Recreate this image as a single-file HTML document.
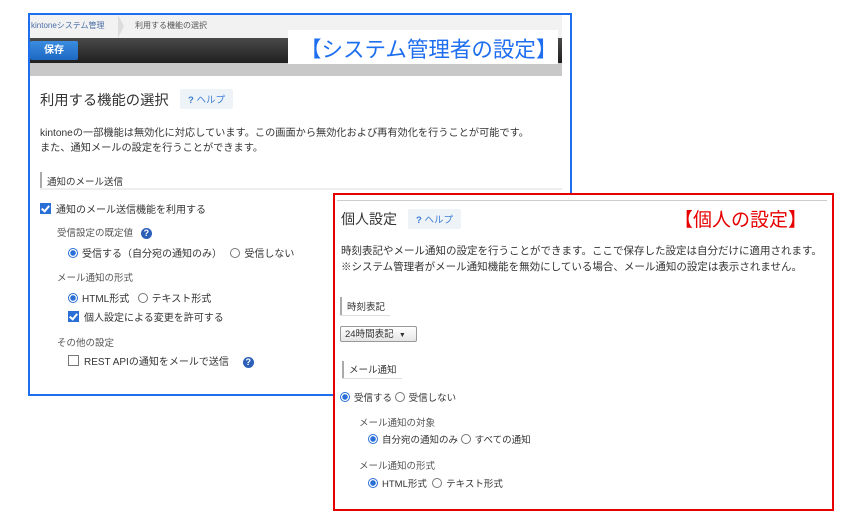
<!DOCTYPE html>
<html><head><meta charset="utf-8"><style>
body{margin:0;width:851px;height:529px;background:#fff;position:relative;overflow:hidden;font-family:"Liberation Sans","Noto Sans CJK JP",sans-serif;color:#333}
.a{position:absolute;white-space:nowrap}
.s{font-size:10px}
.rad{display:inline-block;width:8px;height:8px;border:1px solid #777;border-radius:50%;vertical-align:-1px;margin-right:4px;background:#fff;box-sizing:content-box}
.rad.on{border-color:#2a6fd6;background:radial-gradient(circle,#2a6fd6 0 2.5px,#fff 3px)}
.cb{display:inline-block;width:9px;height:9px;border:1px solid #777;vertical-align:-1px;margin-right:5px;background:#fff}
.cb.on{background:#2a6fd6;border-color:#2a6fd6;position:relative}
.cb.on:after{content:"";position:absolute;left:2px;top:0px;width:3px;height:6px;border:solid #fff;border-width:0 2px 2px 0;transform:rotate(40deg)}
.q{display:inline-block;width:11px;height:11px;border-radius:50%;background:#2c5fb8;color:#fff;font-size:9px;text-align:center;line-height:11px;font-weight:bold}
.help{background:#eef3f8;color:#3a7bd5;font-size:9.5px;padding:3px 8px;border-radius:2px}
.g{color:#555}
</style></head><body>
<div class="a" style="left:28px;top:13px;width:540px;height:379px;border:2px solid #1e6ef0"></div>
<div class="a" style="left:30px;top:15px;width:532px;height:23px;background:#f2f2f2"></div>
<div class="a" style="left:31px;top:20px;font-size:8px;color:#4a6fa5">kintoneシステム管理</div>
<div class="a" style="left:118px;top:15px;width:0;height:0;border-top:11px solid transparent;border-bottom:12px solid transparent;border-left:6px solid #ddd"></div>
<div class="a" style="left:135px;top:20px;font-size:8px;color:#555">利用する機能の選択</div>
<div class="a" style="left:30px;top:38px;width:532px;height:25px;background:linear-gradient(#4a4a4a,#1f1f1f)"></div>
<div class="a" style="left:30px;top:41px;width:48px;height:19px;background:linear-gradient(#3a8de0,#1d68c2);border-radius:2px;color:#fff;font-size:10px;font-weight:bold;text-align:center;line-height:19px">保存</div>
<div class="a" style="left:30px;top:63px;width:532px;height:13px;background:#c8c8c8"></div>
<div class="a" style="left:288px;top:30px;width:270px;height:34px;background:#fff"></div>
<div class="a" style="left:300px;top:33px;font-size:21.5px;color:#1e6ef0">【システム管理者の設定】</div>
<div class="a" style="left:40px;top:89px;font-size:14.3px;color:#333">利用する機能の選択</div>
<div class="a help" style="left:180px;top:89px"><b>?</b> ヘルプ</div>
<div class="a" style="left:40px;top:124px;font-size:10.2px">kintoneの一部機能は無効化に対応しています。この画面から無効化および再有効化を行うことが可能です。</div>
<div class="a" style="left:40px;top:139px;font-size:10.2px">また、通知メールの設定を行うことができます。</div>
<div class="a" style="left:40px;top:172px;width:2px;height:16px;background:#aaa"></div>
<div class="a" style="left:40px;top:188px;width:522px;height:2px;background:#eee"></div>
<div class="a" style="left:47px;top:174px;font-size:9.5px">通知のメール送信</div>
<div class="a s" style="left:40px;top:201px"><span class="cb on"></span>通知のメール送信機能を利用する</div>
<div class="a g" style="left:57px;top:225px;font-size:9.5px">受信設定の既定値 &nbsp;&nbsp;<span class="q">?</span></div>
<div class="a s" style="left:68px;top:245px"><span class="rad on"></span>受信する（自分宛の通知のみ） &nbsp; <span class="rad"></span>受信しない</div>
<div class="a g" style="left:57px;top:270px;font-size:9.5px">メール通知の形式</div>
<div class="a s" style="left:68px;top:290px"><span class="rad on"></span>HTML形式 &nbsp; <span class="rad"></span>テキスト形式</div>
<div class="a s" style="left:68px;top:309px"><span class="cb on"></span>個人設定による変更を許可する</div>
<div class="a g" style="left:57px;top:335px;font-size:9.5px">その他の設定</div>
<div class="a s" style="left:68px;top:353px"><span class="cb"></span>REST APIの通知をメールで送信 &nbsp;&nbsp;&nbsp; <span class="q">?</span></div>
<div class="a" style="left:333px;top:193px;width:497px;height:314px;border:2px solid #e60000;background:#fff"></div>
<div class="a" style="left:337px;top:200px;width:490px;height:1px;background:#ccc"></div>
<div class="a" style="left:341px;top:209px;font-size:14px;color:#333">個人設定</div>
<div class="a help" style="left:408px;top:209px"><b>?</b> ヘルプ</div>
<div class="a" style="left:674px;top:205px;font-size:19px;color:#e60000">【個人の設定】</div>
<div class="a" style="left:341px;top:243px;font-size:10.5px">時刻表記やメール通知の設定を行うことができます。ここで保存した設定は自分だけに適用されます。</div>
<div class="a" style="left:341px;top:259px;font-size:10.5px">※システム管理者がメール通知機能を無効にしている場合、メール通知の設定は表示されません。</div>
<div class="a" style="left:340px;top:297px;width:2px;height:18px;background:#aaa"></div>
<div class="a" style="left:340px;top:315px;width:50px;height:1px;background:#ddd"></div>
<div class="a" style="left:347px;top:299px;font-size:9.5px">時刻表記</div>
<div class="a" style="left:340px;top:326px;width:77px;height:16px;border:1px solid #999;border-radius:2px;background:linear-gradient(#fff,#e6e6e6);font-size:9.5px;line-height:16px;padding-left:4px;box-sizing:border-box">24時間表記 &nbsp;<span style="font-size:7px">▼</span></div>
<div class="a" style="left:342px;top:361px;width:2px;height:18px;background:#aaa"></div>
<div class="a" style="left:342px;top:378px;width:60px;height:1px;background:#ddd"></div>
<div class="a" style="left:349px;top:362px;font-size:9.5px">メール通知</div>
<div class="a" style="left:340px;top:390px;font-size:9.5px"><span class="rad on"></span>受信する <span class="rad"></span>受信しない</div>
<div class="a g" style="left:359px;top:415px;font-size:9.5px">メール通知の対象</div>
<div class="a" style="left:368px;top:432px;font-size:9.5px"><span class="rad on"></span>自分宛の通知のみ <span class="rad"></span>すべての通知</div>
<div class="a g" style="left:359px;top:458px;font-size:9.5px">メール通知の形式</div>
<div class="a" style="left:368px;top:476px;font-size:9.5px"><span class="rad on"></span>HTML形式 &nbsp;<span class="rad"></span>テキスト形式</div>
</body></html>
